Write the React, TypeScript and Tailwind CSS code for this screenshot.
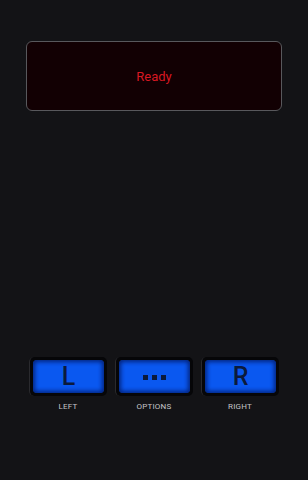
import React from "react";

function Btn({ label, children }: { label: string; children: React.ReactNode }) {
  return (
    <div className="flex flex-col items-center">
      <div className="w-[78px] h-[39px] rounded-[5px] bg-[#060608] p-[3px] border-l border-[#2a2a2e]">
        <div className="w-full h-full rounded-[4px] bg-[#0a58f0] shadow-[inset_0_0_4px_2px_rgba(0,20,90,0.75)] flex items-center justify-center text-[#0b1a3c] text-[25px] font-medium leading-none">
          {children}
        </div>
      </div>
      <div className="mt-[7px] text-[8px] leading-none text-[#c4c4c8] tracking-[0.2px]">{label}</div>
    </div>
  );
}

export default function App() {
  return (
    <div className="w-[308px] h-[480px] bg-[#131316] flex flex-col" style={{ fontFamily: "Roboto, 'Noto Sans', sans-serif" }}>
      <div className="px-[26px] pt-[41px]">
        <div className="h-[70px] rounded-[6px] border border-[#58585c] bg-[#120003] flex items-center justify-center">
          <span className="text-[13px] mt-[1px] text-[#d81822]">Ready</span>
        </div>
      </div>
      <div className="mt-[246px] flex justify-center gap-[8px]">
        <Btn label="LEFT">L</Btn>
        <Btn label="OPTIONS">
          <div className="flex gap-[4px] mt-[1px]">
            <div className="w-[5px] h-[5px] bg-[#0b1a3c]" />
            <div className="w-[5px] h-[5px] bg-[#0b1a3c]" />
            <div className="w-[5px] h-[5px] bg-[#0b1a3c]" />
          </div>
        </Btn>
        <Btn label="RIGHT">R</Btn>
      </div>
    </div>
  );
}
